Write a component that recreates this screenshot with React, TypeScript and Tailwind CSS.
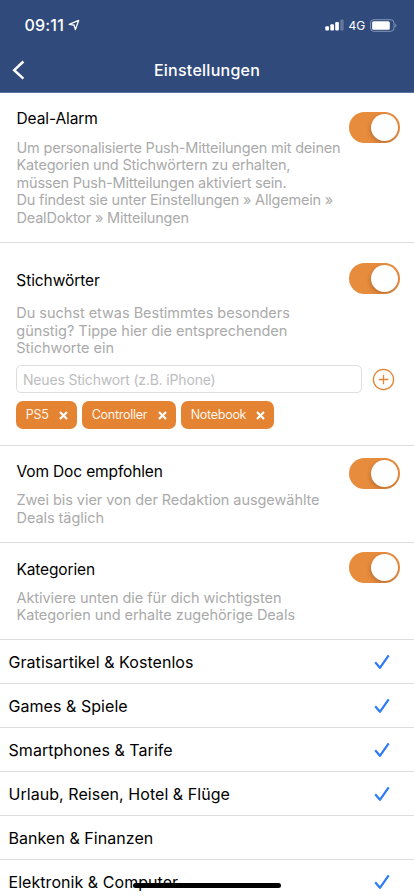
import { useState } from "react";

function Toggle({ className }: { className: string }) {
  const [on, setOn] = useState(true);
  return (
    <button
      role="switch"
      aria-checked={on}
      aria-label="Umschalten"
      onClick={() => setOn(!on)}
      className={`flex h-[31px] w-[51px] shrink-0 items-center overflow-hidden rounded-full px-[2px] ${on ? "justify-end bg-[#e78b3d]" : "justify-start bg-[#e5e5e5]"} ${className}`}
    >
      <span className="size-[27px] rounded-full bg-white shadow-[-1px_2px_4px_rgba(0,0,0,0.18)]" />
    </button>
  );
}

function Description({ lines, className }: { lines: string[]; className: string }) {
  return (
    <p className={`text-[14.5px] whitespace-nowrap text-[#aaaaaa] ${className}`}>
      {lines.map((line) => (
        <span key={line} className="block">{line}</span>
      ))}
    </p>
  );
}

function Check() {
  return (
    <svg width="16" height="16" viewBox="0 0 16 16" fill="none" className="mr-[24px]">
      <path d="M1.2 8.3 5.9 13.8 14.7 1.4" stroke="#2f7bf6" strokeWidth="2.2" strokeLinejoin="round" />
    </svg>
  );
}

function Tag({ label, className }: { label: string; className: string }) {
  return (
    <div className={`flex h-[28px] items-center justify-between rounded-[7px] bg-[#e48331] pr-[9.5px] pl-[9.7px] text-[12.5px] text-[#fff5eb] ${className}`}>
      <span>{label}</span>
      <svg width="9" height="9" viewBox="0 0 9 9" className="shrink-0">
        <path d="M1 1 8 8M8 1 1 8" stroke="white" strokeWidth="2.2" />
      </svg>
    </div>
  );
}

const categories = [
  { name: "Gratisartikel & Kostenlos", active: true },
  { name: "Games & Spiele", active: true },
  { name: "Smartphones & Tarife", active: true },
  { name: "Urlaub, Reisen, Hotel & Flüge", active: true },
  { name: "Banken & Finanzen", active: false },
  { name: "Elektronik & Computer", active: true },
];

export default function App() {
  return (
    <div className="relative flex h-[896px] w-[414px] flex-col overflow-hidden bg-white font-['Inter','Liberation_Sans',sans-serif] text-black">
      <header className="flex h-[93px] shrink-0 flex-col border-b border-[#5b75a3] bg-[#304a7b] text-white">
        <div className="flex h-[48px] items-start justify-between pt-[15px] pr-[17px] pl-[24.5px]">
          <div className="flex items-center">
            <span className="text-[16px] leading-[20px] font-medium tracking-[0.2px]">09:11</span>
            <svg width="12" height="12" viewBox="0 0 12 12" fill="none" className="ml-[3.5px]">
              <path d="M1.2 5.4 10.7 1.3 7.4 10.6 6 6Z" stroke="white" strokeWidth="1.3" strokeLinejoin="round" />
            </svg>
          </div>
          <div className="flex h-[20px] items-center">
            <svg width="19" height="12" viewBox="0 0 19 12" fill="white">
              <rect x="0.3" y="7.3" width="3.7" height="4.2" rx="1" />
              <rect x="5.3" y="5.2" width="3.7" height="6.3" rx="1" />
              <rect x="10.2" y="3" width="3.7" height="8.5" rx="1" />
              <rect x="15.2" y="0.5" width="3.5" height="11" rx="1" opacity="0.25" />
            </svg>
            <span className="mt-[2px] ml-[4px] text-[12px] leading-[20px] tracking-[-0.1px]">4G</span>
            <svg width="27" height="13" viewBox="0 0 27 13" fill="none" className="ml-[5px]">
              <rect x="0.5" y="0.7" width="23.5" height="11.6" rx="3.3" stroke="#8495b6" />
              <rect x="2.1" y="2.2" width="17.7" height="8.6" rx="1.6" fill="white" />
              <path d="M25.3 4.5v4c1.5-.5 1.5-3.5 0-4Z" fill="#8495b6" />
            </svg>
          </div>
        </div>
        <div className="grid h-[44px] grid-cols-[60px_1fr_60px] items-center">
          <button aria-label="Zurück" className="pl-[12px]">
            <svg width="14" height="20" viewBox="0 0 14 20" fill="none">
              <path d="M11.4 1.5 2.2 10.2 11.4 18.7" stroke="white" strokeWidth="2.5" />
            </svg>
          </button>
          <h1 className="text-center text-[16px] font-medium tracking-[0.26px]">Einstellungen</h1>
        </div>
      </header>

      <section className="flex h-[150px] shrink-0 justify-between border-b border-[#dddddf] pr-[14px] pl-[16.5px]">
        <div className="w-[326px]">
          <h2 className="mt-[16px] text-[15.5px] leading-[20px] tracking-[-0.09px]">Deal-Alarm</h2>
          <Description
            className="mt-[10px] leading-[17.4px] tracking-[-0.2px]"
            lines={["Um personalisierte Push-Mitteilungen mit deinen", "Kategorien und Stichwörtern zu erhalten,", "müssen Push-Mitteilungen aktiviert sein.", "Du findest sie unter Einstellungen » Allgemein »", "DealDoktor » Mitteilungen"]}
          />
        </div>
        <Toggle className="mt-[19px]" />
      </section>

      <section className="flex h-[203px] shrink-0 flex-col border-b border-[#dddddf] pr-[14px] pl-[16px]">
        <div className="flex h-[122px] justify-between">
          <div className="w-[326px] pl-[0.3px]">
            <h2 className="mt-[28px] text-[15.5px] leading-[20px] tracking-[-0.09px]">Stichwörter</h2>
            <Description
              className="mt-[13px] leading-[17.5px] tracking-[-0.03px]"
              lines={["Du suchst etwas Bestimmtes besonders", "günstig? Tippe hier die entsprechenden", "Stichworte ein"]}
            />
          </div>
          <Toggle className="mt-[20px]" />
        </div>
        <div className="flex h-[28px] items-center">
          <input
            placeholder="Neues Stichwort (z.B. iPhone)"
            className="h-[28px] w-[346px] rounded-[5px] border border-[#dedede] px-[6px] text-[14px] tracking-[-0.18px] outline-none placeholder:text-[#bdbdc0]"
          />
          <button aria-label="Hinzufügen" className="ml-[10px]">
            <svg width="23" height="23" viewBox="0 0 23 23" fill="none" stroke="#e48331">
              <circle cx="11.5" cy="11.5" r="10.1" strokeWidth="1.3" />
              <path d="M11.5 6.7v9.6M6.7 11.5h9.6" strokeWidth="1.3" />
            </svg>
          </button>
        </div>
        <div className="mt-[8px] flex gap-[5px]">
          <Tag label="PS5" className="w-[61px] tracking-[-0.2px]" />
          <Tag label="Controller" className="w-[94px] tracking-[-0.27px]" />
          <Tag label="Notebook" className="w-[93px] tracking-[-0.27px]" />
        </div>
      </section>

      <section className="flex h-[97px] shrink-0 justify-between border-b border-[#dddddf] pr-[14px] pl-[16.5px]">
        <div className="w-[326px]">
          <h2 className="mt-[16px] text-[15.5px] leading-[20px] tracking-[-0.14px]">Vom Doc empfohlen</h2>
          <Description className="mt-[9px] leading-[17.5px] tracking-[-0.06px]" lines={["Zwei bis vier von der Redaktion ausgewählte", "Deals täglich"]} />
        </div>
        <Toggle className="mt-[12px]" />
      </section>

      <section className="flex h-[97px] shrink-0 justify-between border-b border-[#dddddf] pr-[14px] pl-[16.5px]">
        <div className="w-[326px]">
          <h2 className="mt-[17px] text-[15.5px] leading-[20px] tracking-[-0.15px]">Kategorien</h2>
          <Description className="mt-[8.5px] leading-[17.5px] tracking-[-0.06px]" lines={["Aktiviere unten die für dich wichtigsten", "Kategorien und erhalte zugehörige Deals"]} />
        </div>
        <Toggle className="mt-[9px]" />
      </section>

      <ul className="shrink-0">
        {categories.map(({ name, active }) => (
          <li key={name} className="flex h-[44px] items-center justify-between border-b border-[#dddddf] pl-[8.5px]">
            <span className="text-[16px] tracking-[0.05px]">{name}</span>
            {active && <Check />}
          </li>
        ))}
      </ul>

      <div className="absolute bottom-[8px] left-[133px] h-[5px] w-[148px] rounded-full bg-black" />
    </div>
  );
}
